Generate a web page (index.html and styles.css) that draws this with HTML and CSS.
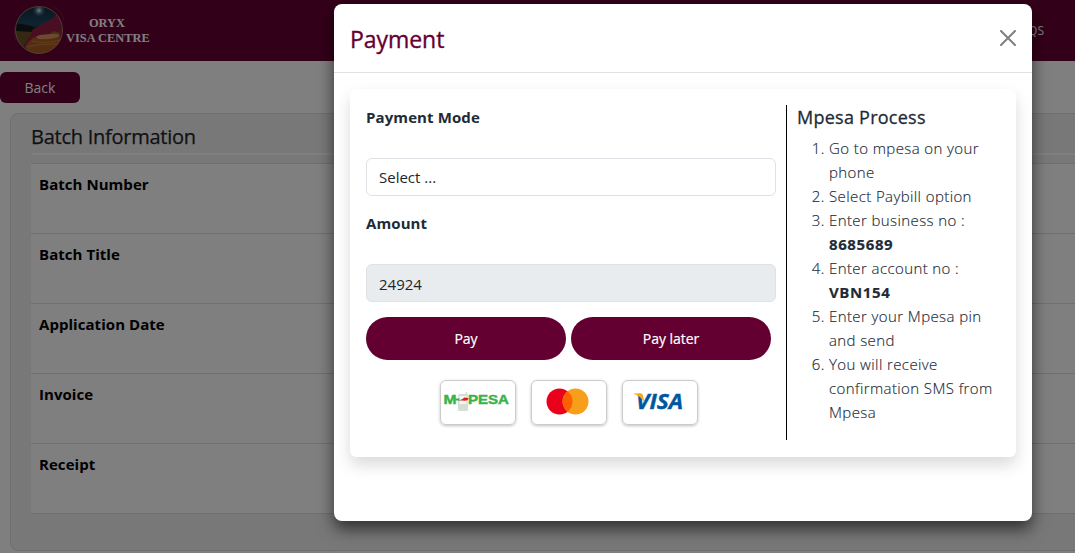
FILE: index.html
```html
<!DOCTYPE html>
<html lang="en">
<head>
<meta charset="utf-8">
<title>Oryx Visa Centre</title>
<link rel="stylesheet" href="styles.css">
</head>
<body>
<header class="topbar">
  <div class="brand">
    <svg class="brand-logo" width="52" height="52" viewBox="0 0 52 52">
      <defs>
        <linearGradient id="sky" x1="0" y1="0" x2="0" y2="1">
          <stop offset="0" stop-color="#0d2a39"/><stop offset=".38" stop-color="#1d4961"/><stop offset=".46" stop-color="#284227"/>
          <stop offset=".5" stop-color="#7c5e32"/><stop offset=".62" stop-color="#a06030"/><stop offset="1" stop-color="#7b3c20"/>
        </linearGradient>
        <radialGradient id="moon"><stop offset="0" stop-color="#dff5ff"/><stop offset=".3" stop-color="#7799aa"/><stop offset="1" stop-color="#204050" stop-opacity="0"/></radialGradient>
        <clipPath id="disc"><circle cx="25" cy="26" r="23.500"/></clipPath>
      </defs>
      <g clip-path="url(#disc)">
        <rect width="52" height="52" fill="url(#sky)"/>
        <circle cx="25" cy="6.500" r="7" fill="url(#moon)"/>
        <path d="M0 19q10 1 24 5l-4 4H0z" fill="#121c18"/>
        <path d="M0 27l20 1-9 16H0z" fill="#6b5226"/>
        <path d="M17 33q18 4 32 1v18H10z" fill="#a95d26"/>
        <path d="M22 32q13-4 26-1-7 5-24 4z" fill="#d9975b"/>
        <path d="M18 37q14 3 30-1M12 43q16-4 34-3" fill="none" stroke="#c97c3a"/>
        <path d="M8 46l3-7 5-7 3-7 6-3 9-5 5-3 6-6 4 4 1 8-4 4 3 5-2 5-2-1 1-4-6-2-4 3-11 1-6 3-6 5-3 6z" fill="#951d46"/>
      </g>
      <circle cx="25" cy="26" r="23.500" fill="none" stroke="#a88b70" stroke-width=".8"/>
      <path d="M40 3q8 5 10 13M1 21q-2 8 1 15" fill="none" stroke="#8a1f46" stroke-width=".8"/>
    </svg>
    <div class="brand-name">ORYX<br>VISA CENTRE</div>
  </div>
  <a class="nav-link">FAQS</a>
</header>
<main class="page">
  <button class="back">Back</button>
  <section class="batch">
    <h5 class="batch-title">Batch Information</h5>
    <hr class="batch-rule">
    <div class="batch-rows">
      <div class="batch-row">Batch Number</div>
      <div class="batch-row">Batch Title</div>
      <div class="batch-row">Application Date</div>
      <div class="batch-row">Invoice</div>
      <div class="batch-row">Receipt</div>
    </div>
  </section>
</main>
<div class="backdrop">
  <div class="modal">
    <div class="modal-header">
      <h4 class="modal-title">Payment</h4>
      <svg class="close" width="16" height="16" viewBox="0 0 16 16"><path d="M1 1l14 14M15 1L1 15" stroke="#7f7f7f" stroke-width="2" stroke-linecap="round"/></svg>
    </div>
    <div class="modal-body">
      <div class="pay-card">
        <div class="form">
          <label class="label">Payment Mode</label>
          <div class="control">Select ...</div>
          <label class="label">Amount</label>
          <div class="control disabled">24924</div>
          <div class="actions"><button class="pill">Pay</button><button class="pill">Pay later</button></div>
          <div class="methods">
            <div class="method">
              <svg width="74" height="44" viewBox="0 0 74 44">
                <rect x="17" y="13" width="10" height="17" rx="1.500" fill="#d4dfd2"/>
                <rect x="18.500" y="15" width="7" height="8" fill="#f5f7f4"/>
                <path d="M25.500 14v-3" stroke="#d4dfd2" stroke-width="1.500"/>
                <text class="mpesa" x="2.500" y="22.500" textLength="13" lengthAdjust="spacingAndGlyphs">M</text>
                <path d="M14.500 18.500h4" stroke="#37b34a" stroke-width="2"/>
                <path d="M17 19.500q5-1 6-3 3 0 5 1-2 3-6 2z" fill="#d71f2b"/>
                <text class="mpesa" x="27" y="22.500" textLength="41" lengthAdjust="spacingAndGlyphs">PESA</text>
              </svg>
            </div>
            <div class="method">
              <svg width="74" height="44" viewBox="0 0 74 44">
                <circle cx="27.500" cy="20.500" r="13" fill="#eb001b"/><circle cx="43.500" cy="20.500" r="13" fill="#f79e1b"/>
                <path d="M35.500 10.250a13 13 0 0 1 0 20.500 13 13 0 0 1 0-20.500z" fill="#ff5f00"/>
              </svg>
            </div>
            <div class="method">
              <svg width="74" height="44" viewBox="0 0 74 44">
                <text class="visa" x="13" y="28" textLength="47" lengthAdjust="spacingAndGlyphs">VISA</text>
                <path d="M10 12.500h7q2.500 0 3 2l1.500 7q-3-6-11.500-9z" fill="#faa61a"/>
              </svg>
            </div>
          </div>
        </div>
        <aside class="process">
          <h5 class="process-title">Mpesa Process</h5>
          <ol class="steps">
            <li>Go to mpesa on your<br>phone</li>
            <li>Select Paybill option</li>
            <li>Enter business no :<br><b>8685689</b></li>
            <li>Enter account no :<br><b>VBN154</b></li>
            <li>Enter your Mpesa pin<br>and send</li>
            <li>You will receive<br>confirmation SMS from<br>Mpesa</li>
          </ol>
        </aside>
      </div>
    </div>
  </div>
</div>
</body>
</html>
```
FILE: styles.css
```css
* { box-sizing: border-box; }
body { margin: 0; height: 553px; overflow: hidden; background: #fff; font: 400 16px/24px "Open Sans", "Noto Sans", sans-serif; color: #212529; }
h4, h5 { margin: 0; font-weight: 500; }
button { border: 0; font-family: inherit; color: #fff; background: #630031; }
.topbar { height: 61px; background: #660033; display: flex; justify-content: space-between; align-items: center; padding: 0 31px 0 14px; }
.brand { display: flex; align-items: center; }
.brand-logo { margin-bottom: 1px; }
.brand-name { font: bold 12.400px/15px "Liberation Serif", serif; color: #fff; text-align: center; white-space: nowrap; width: 82px; }
.nav-link { color: #fff; font-size: 12px; }
.page { padding-top: 11px; }
.back { display: block; width: 80px; height: 31px; border-radius: 6px; font-size: 14px; background: #660033; padding: 0; }
.batch { margin: 10px -30px 0 10px; height: 438px; border: 1px solid #dedede; border-radius: 8px; background: #f0f0f0; padding: 11px 20px; }
.batch-title { font-size: 20px; line-height: 24px; font-weight: 400; letter-spacing: -.25px; -webkit-text-stroke: .25px; }
.batch-rule { height: 2px; margin: 4px 0 8px; border: 0; border-radius: 2px; background: #fff; }
.batch-rows { border-top: 1px solid #dedede; }
.batch-row { height: 70px; padding: 8px; background: #fff; border-bottom: 1px solid #dedede; font-weight: 700; font-size: 15px; letter-spacing: .05px; color: #000; }
.backdrop { position: absolute; inset: 0; height: 553px; background: rgba(0,0,0,.5); padding: 4px 43px 32px 334px; }
.modal { height: 517px; background: #fff; border-radius: 8px; box-shadow: 0 8px 16px rgba(0,0,0,.6); }
.modal-header { height: 69px; display: flex; align-items: center; justify-content: space-between; padding: 0 16px 1px; border-bottom: 1px solid #dee2e6; }
.modal-title { color: #660033; font-size: 23px; line-height: 30px; letter-spacing: -.05px; -webkit-text-stroke: .35px; padding-top: 3px; }
.modal-body { padding: 16px; }
.pay-card { height: 368px; background: #fff; border-radius: 6px; box-shadow: 0 8px 16px rgba(0,0,0,.15); padding: 16px; display: flex; gap: 10px; color: #212b36; }
.form { width: 410px; }
.label { display: block; height: 53px; font-weight: 700; font-size: 15px; letter-spacing: .1px; color: #212b36; }
.control { height: 38px; border: 1px solid #dee2e6; border-radius: 6px; padding: 6px 12px; font-size: 15px; margin-bottom: 15px; color: #212529; }
.disabled { background: #e9ecef; padding-top: 7px; }
.actions { display: flex; gap: 5px; }
.pill { width: 200px; height: 43px; border-radius: 22px; font-size: 14px; letter-spacing: -.05px; -webkit-text-stroke: .2px; }
.methods { display: flex; gap: 15px; justify-content: center; padding: 20px 6px 0 0; }
.method { width: 76px; height: 45px; border: 1px solid #ccc; border-radius: 6px; box-shadow: 0 1px 3px rgba(0,0,0,.25); }
.methods { padding-right: 5px; }
.method svg { display: block; }
.mpesa { font: bold 12px "Liberation Sans", sans-serif; fill: #37b34a; stroke: #37b34a; stroke-width: .4; }
.visa { font: italic bold 21.500px "Open Sans", sans-serif; fill: #00579f; stroke: #00579f; stroke-width: .4; }
.process { width: 214px; height: 335px; border-left: 1px solid #000; padding-left: 10px; }
.process-title { font-size: 18px; line-height: 24px; margin-bottom: 7px; letter-spacing: .25px; -webkit-text-stroke: .3px; }
.steps { margin: 0; padding-left: 32px; font-size: 15px; font-weight: 300; letter-spacing: .4px; white-space: nowrap; -webkit-text-stroke: .15px; }
.steps b { font-weight: 700; letter-spacing: .6px; }
```
